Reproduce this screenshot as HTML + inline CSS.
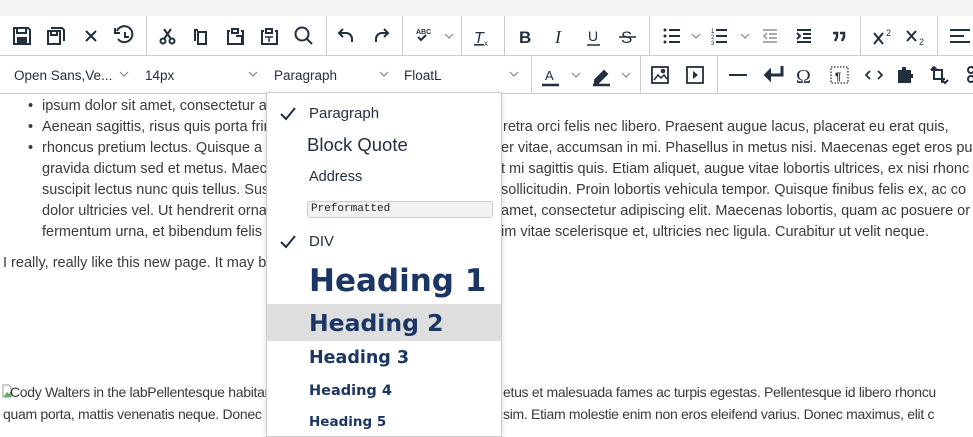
<!DOCTYPE html>
<html><head><meta charset="utf-8"><style>
*{margin:0;padding:0;box-sizing:border-box}
body{width:973px;height:430px;overflow:hidden;background:#fff;position:relative;font-family:"Liberation Sans","DejaVu Sans",sans-serif;color:#333}
.t{position:absolute;font-size:14.5px;white-space:nowrap;line-height:21px;color:#3a3a3a}
.dd{position:absolute;left:266px;top:92px;width:236px;height:345px;background:#fff;border:1px solid #ccc;box-shadow:0 2px 6px rgba(0,0,0,.15)}
.it{position:absolute;left:42px;white-space:nowrap;color:#222f3e}
.h{font-family:"DejaVu Sans",Verdana,sans-serif;font-weight:bold;color:#1b3664}
.chk{position:absolute;left:12px}
</style></head><body>
<div class="t" style="left:28px;top:96px">•</div>
<div class="t" style="left:28px;top:117px">•</div>
<div class="t" style="left:28px;top:138px">•</div>
<div class="t" style="left:42px;top:96px">ipsum dolor sit amet, consectetur adipiscing</div>
<div class="t" style="left:42px;top:117px">Aenean sagittis, risus quis porta fringilla, ph</div>
<div class="t" style="left:42px;top:138px">rhoncus pretium lectus. Quisque a est vitae</div>
<div class="t" style="left:42px;top:159px">gravida dictum sed et metus. Maecenas at i</div>
<div class="t" style="left:42px;top:180px">suscipit lectus nunc quis tellus. Suspendiss</div>
<div class="t" style="left:42px;top:201px">dolor ultricies vel. Ut hendrerit ornare sit a</div>
<div class="t" style="left:42px;top:222px">fermentum urna, et bibendum felis dictum</div>
<div class="t" style="left:3px;top:253px">I really, really like this new page. It may be the</div>
<div class="t" style="left:503px;top:117px">retra orci felis nec libero. Praesent augue lacus, placerat eu erat quis,</div>
<div class="t" style="left:501px;top:138px">er vitae, accumsan in mi. Phasellus in metus nisi. Maecenas eget eros pu</div>
<div class="t" style="left:501px;top:159px">t mi sagittis quis. Etiam aliquet, augue vitae lobortis ultrices, ex nisi rhonc</div>
<div class="t" style="left:501px;top:180px">sollicitudin. Proin lobortis vehicula tempor. Quisque finibus felis ex, ac co</div>
<div class="t" style="left:501px;top:201px">amet, consectetur adipiscing elit. Maecenas lobortis, quam ac posuere or</div>
<div class="t" style="left:501px;top:222px">im vitae scelerisque et, ultricies nec ligula. Curabitur ut velit neque.</div>
<svg style="position:absolute;left:2px;top:384px" width="10" height="14"><path d="M1 1h6l2 2v10H1z" fill="#fff" stroke="#999"/><path d="M2 12l3-4 2 2 2-3v6H2z" fill="#6a6"/></svg>
<div class="t" style="left:10px;top:382px;font-size:14px;letter-spacing:-0.3px">Cody Walters in the labPellentesque habitant</div>
<div class="t" style="left:3px;top:404px;font-size:14px;letter-spacing:-0.3px">quam porta, mattis venenatis neque. Donec</div>
<div class="t" style="left:503px;top:382px;font-size:14px;letter-spacing:-0.3px">etus et malesuada fames ac turpis egestas. Pellentesque id libero rhoncu</div>
<div class="t" style="left:503px;top:404px;font-size:14px;letter-spacing:-0.3px">sim. Etiam molestie enim non eros eleifend varius. Donec maximus, elit c</div>

<svg style="position:absolute;left:0;top:0" width="973" height="94" fill="none" stroke="#222f3e" stroke-width="2" font-family="Liberation Sans,sans-serif">
<rect x="0" y="0" width="973" height="16" fill="#f4f4f4" stroke="none"/>
<rect x="0" y="16" width="973" height="77" fill="#fff" stroke="none"/>
<g stroke="#ccc" stroke-width="1">
<line x1="0" y1="55.5" x2="973" y2="55.5"/><line x1="0" y1="93.5" x2="973" y2="93.5"/>
<line x1="146.5" y1="16" x2="146.5" y2="55"/><line x1="326.5" y1="16" x2="326.5" y2="55"/><line x1="402.5" y1="16" x2="402.5" y2="55"/><line x1="461.5" y1="16" x2="461.5" y2="55"/><line x1="504.5" y1="16" x2="504.5" y2="55"/><line x1="649.5" y1="16" x2="649.5" y2="55"/><line x1="860.5" y1="16" x2="860.5" y2="55"/><line x1="937.5" y1="16" x2="937.5" y2="55"/>
<line x1="531.5" y1="56" x2="531.5" y2="93"/><line x1="640.5" y1="56" x2="640.5" y2="93"/><line x1="717.5" y1="56" x2="717.5" y2="93"/>
</g>
<path d="M14 28h14l2 2v14H14z M17 28v5h9v-5" /><rect x="17" y="37" width="10" height="6" fill="#222f3e" stroke="none"/>
<path d="M48 31h12v13H48z M51 31v4h6v-4 M51 28h11l2 2v11"/>
<path d="M86 31l10 10M96 31l-10 10"/>
<path d="M117 31a8 8 0 1 1 1 8 M115 28v5h5 M125 32v5h4"/>
<circle cx="163" cy="41" r="2.5"/><circle cx="172" cy="41" r="2.5"/><path d="M164 39l7-10M171 39l-7-10"/>
<path d="M198 30h-3v11 M198 32h8v12h-8z"/>
<path d="M230 31h-2v13h15v-13h-2 M232 29h6v4h-6z M236 36h6v8"/>
<path d="M264 31h-2v13h15v-13h-2 M266 29h6v4h-6z"/><path d="M265 37h8M269 37v5" stroke-width="1.5"/>
<circle cx="302" cy="34" r="6.5"/><path d="M307 39l5 5"/>
<path d="M352 42v-3a6 6 0 0 0-6-6h-7 M343 29l-4 4 4 4"/>
<path d="M376 42v-3a6 6 0 0 1 6-6h6 M384 29l4 4-4 4"/>
<text x="416" y="34" font-size="7" fill="#222f3e" stroke="none" font-weight="bold">ABC</text><path d="M418 37l3 3 5-5"/>
<path d="M445 34l4 4 4-4M692 34l4 4 4-4M741 34l4 4 4-4" stroke="#888" stroke-width="1.2"/>
<text x="474" y="43" font-size="16" font-style="italic" fill="#222f3e" stroke="none" text-decoration="underline">T</text><text x="484" y="46" font-size="8" fill="#222f3e" stroke="none">x</text>
<text x="519" y="43" font-size="17" font-weight="bold" fill="#222f3e" stroke="none">B</text>
<text x="555" y="43" font-size="18" font-style="italic" font-family="Liberation Serif,serif" fill="#222f3e" stroke="none">I</text>
<text x="588" y="41" font-size="14" fill="#222f3e" stroke="none">U</text><path d="M587 45h13" stroke-width="1.5"/>
<text x="621" y="43" font-size="17" fill="#222f3e" stroke="none">S</text><path d="M619 37h17" stroke-width="1.5"/>
<g fill="#222f3e" stroke="none"><circle cx="665" cy="30" r="1.5"/><circle cx="665" cy="36" r="1.5"/><circle cx="665" cy="42" r="1.5"/></g>
<path d="M669 30h11M669 36h11M669 42h11"/>
<text x="711" y="33" font-size="6" fill="#222f3e" stroke="none">1</text><text x="711" y="39" font-size="6" fill="#222f3e" stroke="none">2</text><text x="711" y="45" font-size="6" fill="#222f3e" stroke="none">3</text>
<path d="M716 30h11M716 36h11M716 42h11"/>
<path d="M763 30h14M769 34h8M769 38h8M763 42h14M767 33l-3 3 3 3" stroke="#aaa"/>
<path d="M797 30h14M803 34h8M803 38h8M797 42h14M797 33l3 3-3 3"/>
<path d="M833 33h4v4l-2 4M840 33h4v4l-2 4" stroke-width="2.5"/>
<path d="M874 33l9 11M883 33l-9 11"/><text x="886" y="36" font-size="9" fill="#222f3e" stroke="none">2</text>
<path d="M907 31l9 10M916 31l-9 10"/><text x="919" y="45" font-size="9" fill="#222f3e" stroke="none">2</text>
<path d="M950 30h20M950 36h14M950 42h20"/>
<text x="14" y="80" font-size="13.5" fill="#222f3e" stroke="none">Open Sans,Ve...</text>
<text x="145" y="80" font-size="13.5" fill="#222f3e" stroke="none">14px</text>
<text x="274" y="80" font-size="13.5" fill="#222f3e" stroke="none">Paragraph</text>
<text x="404" y="80" font-size="13.5" fill="#222f3e" stroke="none">FloatL</text>
<path d="M120 72l4 4 4-4M249 72l4 4 4-4M380 72l4 4 4-4M510 72l4 4 4-4M572 73l4 4 4-4M622 73l4 4 4-4" stroke="#888" stroke-width="1.2"/>
<text x="545" y="80" font-size="13" fill="#222f3e" stroke="none">A</text><path d="M542 85h17" stroke-width="2.5"/>
<path d="M595 80l9-9 3 3-9 9h-3z" fill="#222f3e"/><path d="M593 85h17" stroke-width="2.5"/>
<rect x="652" y="67" width="16" height="16" stroke-width="1.8"/><path d="M654 80l4-5 3 3 3-3 3 4" stroke-width="1.5"/><circle cx="663" cy="71" r="1.3"/>
<rect x="687" y="67" width="16" height="16" stroke-width="1.8"/><path d="M693 71v8l5-4z" fill="#222f3e" stroke="none"/>
<path d="M729 75h18"/>
<path d="M782 66v9h-13" stroke-width="3"/><path d="M770 70l-5 5 5 5z" fill="#222f3e"/>
<text x="796" y="83" font-size="20" font-family="Liberation Serif,serif" fill="#222f3e" stroke="none">Ω</text>
<rect x="831" y="67" width="17" height="16" stroke-width="1.3" stroke-dasharray="1.5 1.5"/><text x="835" y="80" font-size="11" font-weight="bold" fill="#222f3e" stroke="none">¶</text>
<path d="M870 71l-4 4 4 4M878 71l4 4-4 4" stroke-width="1.8"/>
<path d="M898 70h4v-3h4v3h5v4h2v4h-2v5h-13z" fill="#222f3e" stroke="none"/>
<path d="M934 67v12h11M931 70h11v13M931 70l3-3 3 3M942 80l3 3 3-3" stroke-width="2"/>
<circle cx="971" cy="70" r="3"/><circle cx="971" cy="79" r="3"/>
</svg>

<div class="dd">
<svg class="chk" style="top:13px" width="18" height="16"><path d="M2 8l5 5 9-11" stroke="#222f3e" stroke-width="2" fill="none"/></svg>
<div class="it" style="top:12px;font-size:15px">Paragraph</div>
<div class="it" style="top:41px;font-size:18.5px;left:40px">Block Quote</div>
<div class="it" style="top:76px;font-size:14.5px">Address</div>
<div style="position:absolute;left:40px;top:108px;width:186px;height:17px;border:1px solid #ccc;border-radius:3px;background:#f2f2f2;font-family:'Liberation Mono',monospace;font-size:11px;line-height:15px;padding-left:3px;color:#222">Preformatted</div>
<svg class="chk" style="top:141px" width="18" height="16"><path d="M2 8l5 5 9-11" stroke="#222f3e" stroke-width="2" fill="none"/></svg>
<div class="it" style="top:140px;font-size:15px">DIV</div>
<div class="it h" style="top:168px;font-size:31px;line-height:40px">Heading 1</div>
<div style="position:absolute;left:0;top:211px;width:234px;height:37px;background:#dedede"></div>
<div class="it h" style="top:214px;font-size:23.5px;line-height:32px">Heading 2</div>
<div class="it h" style="top:253px;font-size:17.5px;line-height:24px">Heading 3</div>
<div class="it h" style="top:288px;font-size:14.5px;line-height:20px">Heading 4</div>
<div class="it h" style="top:319px;font-size:13.5px;line-height:20px">Heading 5</div>
</div>
</body></html>
